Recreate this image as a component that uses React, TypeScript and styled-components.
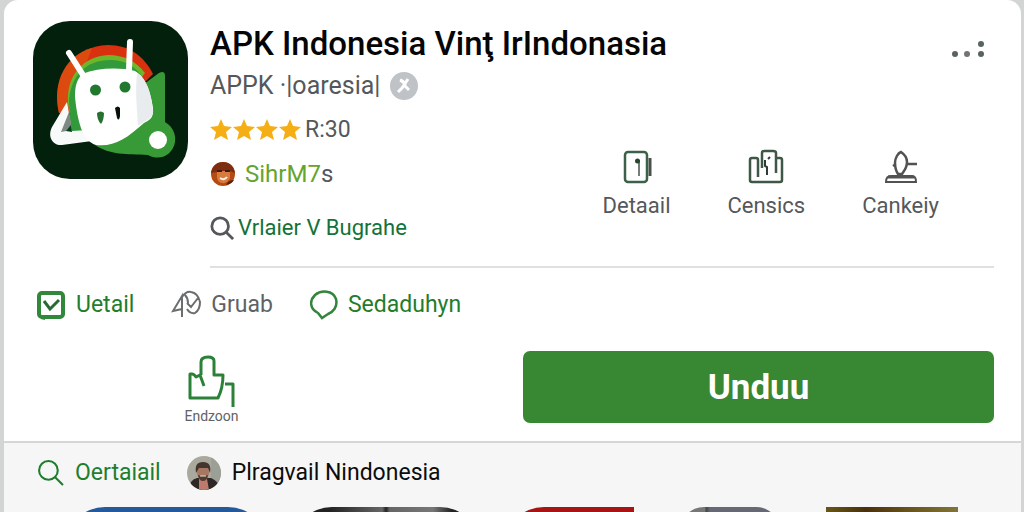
import React from "react";
import styled, { createGlobalStyle } from "styled-components";

const GlobalStyle = createGlobalStyle`
  * { box-sizing: border-box; }
  body {
    margin: 0;
    background: #d3d4d4;
    font-family: Roboto, "Liberation Sans", sans-serif;
    color: #55585a;
  }
  button { font: inherit; border: 0; padding: 0; background: none; cursor: pointer; }
  a { text-decoration: none; }
  h1, p { margin: 0; }
  svg { display: block; flex: none; }
`;

const Page = styled.main`
  height: 100vh;
  overflow-y: auto;
  scrollbar-width: none;
  padding: 0 3px 0 4px;
`;

const Card = styled.section`
  background: #fff;
  border-radius: 14px 14px 0 0;
  border-bottom: 2px solid #d5d6d8;
  padding: 20px 27px 18px 29px;
`;

const Header = styled.header`
  display: flex;
  gap: 21px;
`;

const Summary = styled.div`
  flex: 1;
  min-width: 0;
  padding-top: 4px;
  border-bottom: 2px solid #dfe0e0;
`;

const TitleRow = styled.div`
  display: flex;
  justify-content: space-between;
  align-items: center;
  height: 40px;
  padding-right: 7px;
`;

const Title = styled.h1`
  font-size: 33px;
  line-height: 40px;
  font-weight: 500;
  color: #050505;
  white-space: nowrap;
`;

const MoreButton = styled.button`
  padding-top: 10px;
`;

const Publisher = styled.p`
  display: flex;
  align-items: center;
  gap: 10px;
  margin-top: 8px;
  font-size: 25px;
  line-height: 28px;
  font-weight: 400;
  color: #55585a;
`;

const SummaryBody = styled.div`
  display: flex;
  justify-content: space-between;
  margin-top: 16px;
  padding-bottom: 24px;
`;

const Facts = styled.div`
  display: flex;
  flex-direction: column;
  align-items: flex-start;
`;

const Rating = styled.p`
  display: flex;
  align-items: center;
  gap: 4px;
  font-size: 23px;
  line-height: 28px;
`;

const Stars = styled.span`
  display: flex;
  gap: 1px;
`;

const Author = styled.a`
  display: flex;
  align-items: center;
  gap: 9px;
  margin-top: 16px;
  font-size: 24px;
  line-height: 28px;
  color: #64a52b;
`;

const Muted = styled.span`
  color: #55585a;
`;

const SearchLink = styled.a`
  display: flex;
  align-items: center;
  gap: 4px;
  margin-top: 26px;
  font-size: 22px;
  line-height: 28px;
  color: #147238;
`;

const Actions = styled.nav`
  display: flex;
  align-items: flex-start;
  gap: 57px;
  padding: 33px 55px 0 0;
`;

const Action = styled.button`
  display: flex;
  flex-direction: column;
  align-items: center;
  gap: 8px;
  font-size: 22px;
  line-height: 26px;
  color: #55585a;
`;

const Tabs = styled.nav`
  display: flex;
  gap: 37px;
  margin-top: 21px;
  padding-left: 3px;
`;

const Tab = styled.a<{ $active?: boolean }>`
  display: flex;
  align-items: center;
  gap: 10px;
  font-size: 23px;
  line-height: 32px;
  color: ${(p) => (p.$active ? "#1f7d2c" : "#606264")};
`;

const Footer = styled.div`
  display: grid;
  grid-template-columns: 1fr 1fr;
  gap: 19px;
  margin-top: 30px;
`;

const Recommend = styled.button`
  display: flex;
  flex-direction: column;
  align-items: center;
  justify-content: flex-start;
  padding-right: 114px;
  padding-top: 4px;
  font-size: 14px;
  line-height: 14px;
  color: #606264;
`;

const Download = styled.button`
  height: 72px;
  border-radius: 7px;
  background: #388733;
  color: #fff;
  font-size: 35px;
  font-weight: 700;
`;

const Related = styled.section`
  background: #f6f6f7;
`;

const RelatedBar = styled.div`
  display: flex;
  align-items: center;
  gap: 26px;
  height: 64px;
  padding: 0 0 5px 33px;
  font-size: 23px;
`;

const RelatedLink = styled.a<{ $green?: boolean }>`
  display: flex;
  align-items: center;
  gap: 11px;
  color: ${(p) => (p.$green ? "#1f7d2c" : "#0c0c0c")};
`;

const Shelf = styled.div`
  display: grid;
  grid-template-columns: 569fr 278fr;
  gap: 46px;
  padding: 0 63px 24px 61px;
`;

const ShelfGroup = styled.div<{ $columns: string; $gap: number }>`
  display: grid;
  grid-template-columns: ${(p) => p.$columns};
  gap: ${(p) => p.$gap}px;
`;

const Tile = styled.a<{ $fill: string; $radius: string }>`
  height: 110px;
  background: ${(p) => p.$fill};
  border-radius: ${(p) => p.$radius};
`;

const AppLogo = () => (
  <svg width="156" height="160" viewBox="33 20 156 160" role="img" aria-label="APK Indonesia">
    <rect x="33" y="21" width="155" height="158" rx="37" fill="#03200c" />
    <path d="M59 113C51 78 72 46 108 45c21 0 36 11 45 29l-30 30-60 10z" fill="#d9300f" />
    <path d="M59 113C51 80 68 54 92 48L70 108z" fill="#dc4a10" />
    <path d="M68 103c-2-28 16-47 40-48 16 0 28 6 37 18l-30 40-44 12z" fill="#6db52a" />
    <path d="M69 100c2-25 18-40 41-40 14 0 23 5 31 15l-30 60-40-3z" fill="#329a3b" />
    <path d="M144 84l15-11q6-3 6 3v46c8 5 11 12 10 20-2 12-14 20-27 13-22-1-38 0-53-10l30-25z" fill="#379a37" />
    <path d="M67 102l-15 25c-5 10 1 19 10 18l30-4-3-11-17 1z" fill="#f8faf9" />
    <path d="M69 112l-8 20 11-2z" fill="#7d8985" />
    <path d="M71 125l-5 6 6 1z" fill="#073e18" />
    <path d="M82 74c16-6 36-7 53-3 8 4 15 16 18 37 1 11-4 12-9 15-18 16-30 24-48 22-12-4-18-18-21-48 0-12 2-17 7-23z" fill="#fff" />
    <path d="M137 73c9 5 14 18 16 38 0 6-4 8-15 15-1-18-3-35-1-53z" fill="#e9ecef" />
    <path d="M69 53l14 22M130 42l-1 28" stroke="#fff" strokeWidth="6" strokeLinecap="round" />
    <circle cx="95.500" cy="90" r="5.500" fill="#22782e" />
    <circle cx="125" cy="87" r="5.500" fill="#22782e" />
    <path d="M97 113q4-3 7 0 0 7-3 11-4-4-4-11z" fill="#27702f" />
    <path d="M115 108q3-3 5 0v8q-1 6-3 2z" fill="#071108" />
    <circle cx="158" cy="140" r="9" fill="#fff" />
  </svg>
);

const More = () => (
  <svg width="36" height="20" viewBox="0 0 36 20" fill="#58655f">
    <circle cx="4" cy="15" r="3" />
    <circle cx="16" cy="15" r="3" fill="#707472" />
    <circle cx="30" cy="15" r="3" />
    <circle cx="30" cy="5" r="3" />
  </svg>
);

const Badge = () => (
  <svg width="28" height="28" viewBox="0 0 28 28">
    <circle cx="14" cy="14" r="14" fill="#bfc3c7" />
    <path d="M8 20l4-4 6-9M10 8q5 2 5 6l4 4" fill="none" stroke="#fff" strokeWidth="3" />
  </svg>
);

const Star = () => (
  <svg width="22" height="22" viewBox="0 0 22 22">
    <path d="M11 0l3 7 8 1-6 5 2 8-7-4-7 4 2-8-6-5 8-1z" fill="#f5ae16" />
  </svg>
);

const AuthorFace = () => (
  <svg width="26" height="26" viewBox="0 0 26 26">
    <circle cx="13" cy="13" r="12" fill="#b54b12" />
    <path d="M1 12C2 4 8 1 13 1s11 3 12 11l-5-2-13 1z" fill="#7d2d10" />
    <path d="M7 10h13v7q-3 6-8 5-5-1-5-6z" fill="#d87a3e" />
    <path d="M7 10h5M15 10h5" stroke="#3e1c10" strokeWidth="2" />
    <path d="M10 17q4 3 7-1" fill="none" stroke="#fff0df" strokeWidth="2" />
    <path d="M16 24q2-5 8-5-2 4-8 5z" fill="#59200e" />
  </svg>
);

const Magnifier = ({ size, width }: { size: number; width: number }) => (
  <svg width={size} height={size} viewBox="0 0 26 26" fill="none" stroke="currentColor" strokeWidth={width}>
    <circle cx="11" cy="11" r="9" />
    <path d="M17 17l8 8" />
  </svg>
);

const DetailIcon = () => (
  <svg width="32" height="36" viewBox="0 0 32 36" fill="none" stroke="#4a514d" strokeWidth="2">
    <rect x="4" y="3" width="22" height="30" rx="3" stroke="#3d6148" strokeWidth="2.500" />
    <path d="M29 9v18" strokeWidth="3" />
    <path d="M18 11v16" strokeWidth="1.500" />
    <circle cx="16.500" cy="12" r="2.500" fill="#24472f" stroke="none" />
  </svg>
);

const CensicsIcon = () => (
  <svg width="36" height="36" viewBox="0 0 36 36" fill="none" stroke="#3f5747" strokeWidth="2.500">
    <path d="M10 28V11q0-2-2-2H4q-2 0-2 2v20q0 2 2 2h28q2 0 2-2V11q0-2-2-2h-4v15M14 19V4q0-2 2-2h9q3 0 3 2v20" />
    <path d="M19 26v-8l-2-1v-6M20 10l2-2" stroke="#303d34" strokeWidth="2" />
  </svg>
);

const CankeiyIcon = () => (
  <svg width="34" height="36" viewBox="0 0 34 36" fill="none" stroke="#505351" strokeWidth="2.500">
    <path d="M17 3c3 2 6 6 6 10 0 6-3 9-5 12h-4c-2-3-3-6-3-11 0-5 3-10 6-11zM23 15h10M9 17l3-2" />
    <path d="M2 33q0-6 5-6h21q4 0 4 6z" strokeWidth="2" />
    <path d="M4 28h26" strokeWidth="3" />
  </svg>
);

const CheckIcon = () => (
  <svg width="30" height="30" viewBox="0 0 30 30" fill="none" stroke="#32883a" strokeWidth="4">
    <rect x="3" y="3" width="24" height="24" rx="3" />
    <path d="M8 11l6 8 9-9" stroke="#276b32" strokeWidth="3" />
    <path d="M5 28l4 1" strokeWidth="2" />
  </svg>
);

const GruabIcon = () => (
  <svg width="30" height="30" viewBox="0 0 30 30" fill="none" stroke="#6b6e6e" strokeWidth="2">
    <path d="M11 27V6L2 21l9-2M11 7q4-6 9-5 7 1 9 10 0 8-5 11-5 1-8-4M14 5q3 3 3 8M16 13l4 4 7-9" />
  </svg>
);

const BubbleIcon = () => (
  <svg width="28" height="30" viewBox="0 0 28 30" fill="none" stroke="#33843d" strokeWidth="2.500">
    <path d="M5 5C11 0 23 0 26 9c2 8-3 13-8 15l-6 4-4-5C0 19-1 11 5 5z" />
  </svg>
);

const HandIcon = () => (
  <svg width="50" height="54" viewBox="0 0 50 54" fill="none" stroke="#2c8139" strokeWidth="3" strokeLinejoin="round">
    <path d="M17 31l-4-11-4 2q-2-3-4-3H3v24h28q5-10 5-23H27V6q0-4-6-4-7 0-7 5v13" />
    <path d="M38 29h8v23" />
  </svg>
);

const PersonPhoto = () => (
  <svg width="34" height="34" viewBox="0 0 34 34">
    <defs>
      <clipPath id="person"><circle cx="17" cy="17" r="17" /></clipPath>
    </defs>
    <g clipPath="url(#person)">
      <path d="M0 0h34v34H0z" fill="#aaa99e" />
      <path d="M24 0h10v34H24z" fill="#9b9f96" />
      <path d="M2 34q0-10 8-12l14 0q8 3 9 12z" fill="#2d2725" />
      <path d="M12 23h8l2 11H12z" fill="#bd7b6b" />
      <ellipse cx="16" cy="16" rx="6" ry="9" fill="#a87762" />
      <path d="M9 17Q7 6 16 6t7 11l-2-5h-9z" fill="#44352e" />
      <path d="M11 19q5 2 10 0-1 6-5 6t-5-6z" fill="#513c33" />
      <path d="M13 20h6" stroke="#eee3d5" strokeWidth="1" />
    </g>
  </svg>
);

export default function App() {
  return (
    <>
      <GlobalStyle />
      <Page>
        <Card>
          <Header>
            <AppLogo />
            <Summary>
              <TitleRow>
                <Title>APK Indonesia Vinţ IrIndonasia</Title>
                <MoreButton aria-label="Menu"><More /></MoreButton>
              </TitleRow>
              <Publisher>APPK ·|oaresia|<Badge /></Publisher>
              <SummaryBody>
                <Facts>
                  <Rating><Stars><Star /><Star /><Star /><Star /></Stars>R:30</Rating>
                  <Author href="#author"><AuthorFace /><span>SihrM7<Muted>s</Muted></span></Author>
                  <SearchLink href="#search"><Muted><Magnifier size={24} width={3} /></Muted>Vrlaier V Bugrahe</SearchLink>
                </Facts>
                <Actions>
                  <Action><DetailIcon />Detaail</Action>
                  <Action><CensicsIcon />Censics</Action>
                  <Action><CankeiyIcon />Cankeiy</Action>
                </Actions>
              </SummaryBody>
            </Summary>
          </Header>
          <Tabs>
            <Tab href="#detail" $active><CheckIcon />Uetail</Tab>
            <Tab href="#gruab"><GruabIcon />Gruab</Tab>
            <Tab href="#sedaduhyn" $active><BubbleIcon />Sedaduhyn</Tab>
          </Tabs>
          <Footer>
            <Recommend><HandIcon />Endzoon</Recommend>
            <Download>Unduu</Download>
          </Footer>
        </Card>
        <Related>
          <RelatedBar>
            <RelatedLink href="#related" $green><Magnifier size={27} width={2} />Oertaiail</RelatedLink>
            <RelatedLink href="#person"><PersonPhoto />Plragvail Nindonesia</RelatedLink>
          </RelatedBar>
          <Shelf>
            <ShelfGroup $columns="203fr 188fr 130fr" $gap={24}>
              <Tile href="#1" aria-label="App 1" $fill="#245a9c" $radius="40px" />
              <Tile href="#2" aria-label="App 2" $fill="linear-gradient(90deg, #222 20%, #666 48%, #222 50%, #666 52%, #777 75%, #222 85%)" $radius="40px" />
              <Tile href="#3" aria-label="App 3" $fill="#a81414" $radius="40px 0 0 40px" />
            </ShelfGroup>
            <ShelfGroup $columns="100fr 132fr" $gap={46}>
              <Tile href="#4" aria-label="App 4" $fill="linear-gradient(90deg, #777 25%, #444 26%, #666874 30%)" $radius="24px" />
              <Tile href="#5" aria-label="App 5" $fill="linear-gradient(90deg, #665817, #49300d 30%, #65511a 60%, #80753a)" $radius="0" />
            </ShelfGroup>
          </Shelf>
        </Related>
      </Page>
    </>
  );
}
